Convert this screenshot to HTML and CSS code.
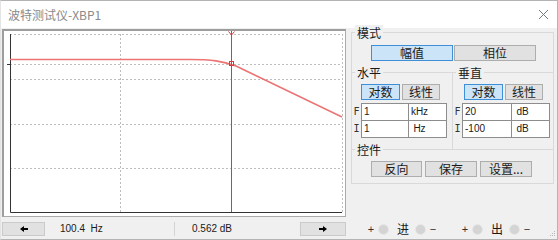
FILE: index.html
```html
<!DOCTYPE html>
<html lang="zh-CN">
<head>
  <meta charset="UTF-8">
  <title>波特测试仪-XBP1</title>
  <link rel="stylesheet" href="styles.css">
</head>
<body>
  <div class="window">
    <div class="titlebar">
      <span class="title">波特测试仪-XBP1</span>
      <svg class="close" width="9" height="9" viewBox="0 0 9 9">
        <path d="M0 0L9 9M9 0L0 9" stroke="#777" stroke-width="1" fill="none"/>
      </svg>
    </div>

    <div class="main">
      <!-- plot + cursor readout -->
      <div class="display">
        <div class="scope">
          <svg width="341" height="185" viewBox="4 31 341 185">
            <path class="grid" d="M10 34.5H342M10 64.5H342M10 79.5H342M10 124.5H342M10 168.5H342M120.5 34V212M342.5 34V212"/>
            <path class="axis-line" d="M10.5 34V212.5H342M7 64.5H10"/>
            <path class="trace" d="M10 59.5H190C212 59.5 222 61 236 66L342 117"/>
            <path class="cursor" d="M231.5 31V212M228.5 31.5L231.5 35L234.5 31.5"/>
            <rect class="cursor" x="229.5" y="61.5" width="4" height="4"/>
          </svg>
        </div>
        <div class="readout">
          <button class="arrow left">
            <svg width="8" height="6" viewBox="0 0 8 6"><path d="M0 3L4 0V2H8V4H4V6Z" fill="#000"/></svg>
          </button>
          <div class="value freq">100.4&nbsp; Hz</div>
          <div class="value gain">0.562 dB</div>
          <button class="arrow right">
            <svg width="8" height="6" viewBox="0 0 8 6"><path d="M8 3L4 0V2H0V4H4V6Z" fill="#000"/></svg>
          </button>
        </div>
      </div>

      <!-- settings -->
      <div class="side">
        <div class="panel">
          <span class="legend">模式</span>
          <div class="mode-row">
            <button class="btn on">幅值</button>
            <button class="btn">相位</button>
          </div>

          <div class="axes">
            <div class="axis h">
              <span class="legend">水平</span>
              <div class="toggle">
                <button class="btn on">对数</button>
                <button class="btn">线性</button>
              </div>
              <div class="field"><span class="tag">F</span><span class="box num">1</span><span class="box unit">kHz</span></div>
              <div class="field"><span class="tag">I</span><span class="box num">1</span><span class="box unit">Hz</span></div>
            </div>
            <div class="axis v">
              <span class="legend">垂直</span>
              <div class="toggle">
                <button class="btn on">对数</button>
                <button class="btn">线性</button>
              </div>
              <div class="field"><span class="tag">F</span><span class="box num">20</span><span class="box unit">dB</span></div>
              <div class="field"><span class="tag">I</span><span class="box num">-100</span><span class="box unit">dB</span></div>
            </div>
          </div>

          <div class="controls">
            <span class="legend">控件</span>
            <div class="ctrl-row">
              <button class="btn">反向</button>
              <button class="btn">保存</button>
              <button class="btn">设置...</button>
            </div>
          </div>
        </div>

        <div class="terminals">
          <span class="sign">+</span><span class="jack"></span><span class="port">进</span><span class="jack"></span><span class="sign">−</span>
          <span class="sign gap">+</span><span class="jack"></span><span class="port">出</span><span class="jack"></span><span class="sign">−</span>
        </div>
      </div>
    </div>

    <svg class="grip" width="7" height="7" viewBox="0 0 7 7">
      <g fill="#b8b8b8"><rect x="5" y="0" width="1" height="1"/><rect x="3" y="2" width="1" height="1"/><rect x="5" y="2" width="1" height="1"/><rect x="1" y="4" width="1" height="1"/><rect x="3" y="4" width="1" height="1"/><rect x="5" y="4" width="1" height="1"/></g>
    </svg>
  </div>
</body>
</html>
```

FILE: styles.css
```css
body {
  margin: 0;
  font-family: "Noto Sans CJK SC", sans-serif;
  color: #1a1a1a;
}
.window {
  position: relative;
  width: 558px;
  height: 240px;
  box-sizing: border-box;
  background: #f0f0f0;
  border: 1px solid #b4b4b4;
  border-left-color: #e4e4e4;
}
.titlebar {
  height: 27px;
  background: #fff;
  display: flex;
  align-items: center;
  justify-content: space-between;
  padding: 0 9px 0 7px;
}
.title {
  font-size: 12px;
  color: #8a8a8a;
  line-height: 14px;
}
.main {
  display: flex;
}

/* plot area */
.display {
  width: 350px;
}
.scope {
  margin: 1px 0 0 1px;
  width: 341px;
  height: 185px;
  border-style: solid;
  border-width: 2px 1px 1px 2px;
  border-color: #9d9d9d #aaaaaa #aaaaaa #9d9d9d;
  background: #fff;
}
.scope svg {
  display: block;
}
.grid {
  fill: none;
  stroke: #bdbdbd;
  stroke-dasharray: 2 2;
}
.axis-line {
  fill: none;
  stroke: #333;
}
.trace {
  fill: none;
  stroke: #ec7474;
  stroke-width: 1.6;
}
.cursor {
  fill: none;
  stroke: #d23c3c;
}
.readout {
  display: flex;
  margin: 5px 0 0 1px;
  width: 344px;
  height: 14px;
}
.arrow {
  width: 43px;
  height: 14px;
  padding: 0;
  border: 1px solid #cacaca;
  background: #e1e1e1;
  display: flex;
  align-items: center;
  justify-content: center;
}
.arrow.right {
  width: 46px;
}
.value {
  font: 10px "Liberation Sans", sans-serif;
  line-height: 14px;
  white-space: pre;
}
.freq {
  width: 129px;
  box-sizing: border-box;
  padding-left: 15px;
}
.gain {
  flex: 1;
  border-left: 1px solid #d4d4d4;
  padding-left: 17px;
}

/* settings panel */
.side {
  width: 203px;
  padding-top: 4px;
}
.panel {
  border: 1px solid #d9d9d9;
  padding-bottom: 6px;
}
.legend {
  display: block;
  width: fit-content;
  margin: -8px 0 0 3px;
  padding: 0 2px;
  background: #f0f0f0;
  font-size: 12px;
  line-height: 16px;
}
.btn {
  height: 16px;
  box-sizing: border-box;
  padding: 0;
  border: 1px solid #adadad;
  background: #e1e1e1;
  font: 12px "Noto Sans CJK SC", sans-serif;
  line-height: 14px;
  color: #1a1a1a;
}
.btn.on {
  background: #cce4f7;
  border-color: #3d8fd8;
}
.mode-row {
  display: flex;
  gap: 1px;
  margin: 4px 0 0 19px;
}
.mode-row .btn {
  width: 82px;
}
.axes {
  display: flex;
  margin-top: 11px;
}
.axis {
  border-top: 1px solid #d9d9d9;
  padding-bottom: 11px;
}
.axis.h {
  width: 100px;
  border-right: 1px solid #d9d9d9;
}
.axis.v {
  flex: 1;
}
.toggle {
  display: flex;
  gap: 2px;
  margin: 3px 0 3px 9px;
}
.axis.v .toggle {
  margin-left: 11px;
}
.toggle .btn {
  width: 39px;
}
.toggle .btn + .btn {
  width: 38px;
}
.field {
  display: flex;
  height: 18px;
}
.field + .field {
  margin-top: -1px;
}
.tag {
  width: 9px;
  text-align: center;
  font: 10px "DejaVu Sans Mono", monospace;
  line-height: 18px;
  color: #333;
}
.box {
  box-sizing: border-box;
  height: 18px;
  background: #fff;
  border: 1px solid #8d8d8d;
  font: 10px "Liberation Sans", sans-serif;
  line-height: 15px;
}
.num {
  width: 48px;
  padding-left: 2px;
}
.axis.v .num {
  width: 50px;
}
.unit {
  width: 39px;
  margin-left: -1px;
  padding-right: 16px;
  text-align: center;
}
.controls {
  border-top: 1px solid #d9d9d9;
}
.ctrl-row {
  display: flex;
  gap: 3px;
  margin: 3px 0 0 19px;
}
.ctrl-row .btn {
  width: 52px;
}
.ctrl-row .btn:first-child {
  width: 51px;
}

/* input / output terminals */
.terminals {
  display: flex;
  align-items: center;
  height: 14px;
  margin-top: 38px;
  padding-left: 16px;
}
.sign {
  width: 8px;
  text-align: center;
  font: 11px "Liberation Sans", sans-serif;
  color: #333;
}
.sign.gap {
  margin-left: 24px;
}
.jack {
  width: 9px;
  height: 9px;
  border-radius: 50%;
  background: #d4d4d4;
  border: 1px solid #e8e8e8;
  margin: 0 3px;
}
.port {
  font-size: 12px;
  line-height: 14px;
  margin: 0 3px 0 5px;
}
.grip {
  position: absolute;
  right: 1px;
  bottom: 1px;
}
```
